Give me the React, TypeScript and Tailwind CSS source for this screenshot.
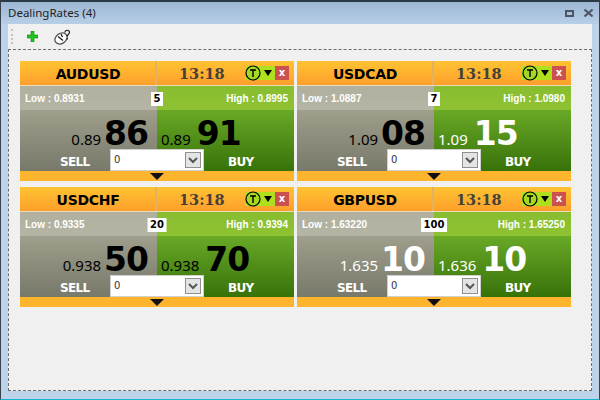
import React from "react";

type Rate = {
  pair: string; low: string; high: string; spread: string;
  sp: string; sb: string; bp: string; bb: string; white?: boolean; sellW?: boolean;
};

const rates: Rate[] = [
  { pair: "AUDUSD", low: "0.8931", high: "0.8995", spread: "5", sp: "0.89", sb: "86", bp: "0.89", bb: "91" },
  { pair: "USDCAD", low: "1.0887", high: "1.0980", spread: "7", sp: "1.09", sb: "08", bp: "1.09", bb: "15", white: true },
  { pair: "USDCHF", low: "0.9335", high: "0.9394", spread: "20", sp: "0.938", sb: "50", bp: "0.938", bb: "70" },
  { pair: "GBPUSD", low: "1.63220", high: "1.65250", spread: "100", sp: "1.635", sb: "10", bp: "1.636", bb: "10", white: true, sellW: true },
];

function Card({ r }: { r: Rate }) {
  const sellColor = r.sellW ? "text-white" : "text-black";
  const buyColor = r.white ? "text-white" : "text-black";
  return (
    <div className="relative w-[274px] h-[120px] flex flex-col">
      <div className="h-[25px] flex bg-gradient-to-b from-[#ffc332] to-[#fd9f2b] border-b border-[#e9dcb8]">
        <div className="w-[137px] flex items-center justify-center pt-[2px] pl-[1px] border-r-2 border-[#dfb264] text-[14px] tracking-[-0.3px] font-bold text-black font-['DejaVu_Sans',sans-serif]">
          {r.pair}
        </div>
        <div className="flex-1 flex items-center pl-[22px] text-[14.5px] font-bold text-[#44413a] font-['DejaVu_Serif',serif]">
          <span className="w-[66px] pt-[2px]">13:18</span>
          <span className="flex items-center h-[14px] w-[30px] bg-[#aee01e]">
            <svg width="16" height="16" viewBox="0 0 16 16" className="shrink-0">
              <circle cx="8" cy="8" r="7" fill="#a5d820" stroke="#000" strokeWidth="1.2" />
              <path d="M5 5h6M8 5v7" stroke="#000" strokeWidth="1.4" fill="none" />
            </svg>
            <svg width="8" height="6" viewBox="0 0 8 6" className="ml-[3px] shrink-0">
              <path d="M0 0h8L4 6z" fill="#000" />
            </svg>
          </span>
          <span className="w-[14px] h-[14px] bg-[#cb5050] text-white text-[10px] font-bold leading-[13px] text-center font-['DejaVu_Sans',sans-serif]">
            x
          </span>
        </div>
      </div>
      <div className="flex h-[24px] text-[10px] font-bold text-white font-['Liberation_Sans',sans-serif]">
        <div className="w-[137px] bg-gradient-to-b from-[#b1b09f] to-[#b5b5a5] flex items-center pl-[5px]">Low : {r.low}</div>
        <div className="w-[137px] bg-gradient-to-b from-[#88bd30] to-[#8fc232] flex items-center justify-end pr-[6px]">High : {r.high}</div>
      </div>
      <div className="flex h-[61px]">
        <div className="w-[137px] bg-gradient-to-b from-[#a09e8c] to-[#77796a] flex flex-col">
          <div className={`h-[39px] pt-[8px] flex items-baseline justify-end pr-[9px] ${sellColor}`}>
            <span className="text-[15px] mr-[3px] font-['Noto_Sans',sans-serif]">{r.sp}</span>
            <span className="text-[33px] leading-[31px] tracking-[-1px] font-bold font-['DejaVu_Sans',sans-serif]">{r.sb}</span>
          </div>
          <div className="flex-1 pl-[40px] text-[12px] tracking-[-0.7px] font-bold text-white font-['DejaVu_Sans',sans-serif] leading-[27px]">
            SELL
          </div>
        </div>
        <div className="w-[137px] bg-gradient-to-b from-[#69a926] to-[#377209] flex flex-col">
          <div className={`h-[39px] pt-[8px] flex items-baseline pl-[4px] ${buyColor}`}>
            <span className="text-[15px] mr-[6px] font-['Noto_Sans',sans-serif]">{r.bp}</span>
            <span className="text-[33px] leading-[31px] tracking-[-1px] font-bold font-['DejaVu_Sans',sans-serif]">{r.bb}</span>
          </div>
          <div className="flex-1 pl-[71px] text-[12px] tracking-[-0.7px] font-bold text-white font-['DejaVu_Sans',sans-serif] leading-[27px]">
            BUY
          </div>
        </div>
      </div>
      <div className="h-[10px] bg-[#feb52d] flex justify-center items-center">
        <svg width="14" height="7" viewBox="0 0 14 7"><path d="M0 0h14L7 7z" fill="#111" /></svg>
      </div>
      {/* spread badge */}
      <div className="absolute left-1/2 top-[31px] -translate-x-1/2 h-[14px] px-[2.5px] bg-white text-black text-[10px] leading-[14px] font-bold text-center font-['DejaVu_Sans',sans-serif]">
        {r.spread}
      </div>
      {/* amount select */}
      <div className="absolute left-[90px] top-[88px] w-[94px] h-[22px] bg-white border border-[#d0d0d0] flex items-center justify-between pl-[3px] pr-[2px]">
        <span className="text-[10px] text-[#333] font-['DejaVu_Sans',sans-serif] -mt-[2px]">0</span>
        <span className="w-[16px] h-[16px] bg-[#e4e4e4] border border-[#909090] flex items-center justify-center">
          <svg width="10" height="7" viewBox="0 0 10 7"><path d="M1 1l4 4 4-4" stroke="#555" strokeWidth="2" fill="none" /></svg>
        </span>
      </div>
    </div>
  );
}

export default function App() {
  return (
    <div className="w-[600px] h-[400px] flex flex-col bg-[#bcd3ea] border border-t-2 border-[#39434e] border-t-[#2c3a46] border-b-[#12b5cf] overflow-hidden font-['DejaVu_Sans',sans-serif]">
      <div className="h-[22px] shrink-0 bg-gradient-to-b from-[#9db6d3] to-[#b7cfe6] flex items-center justify-between pl-[7px] pr-[1px]">
        <span className="text-[11.5px] text-[#1e1e1e] font-['Noto_Sans',sans-serif]">DealingRates (4)</span>
        <span className="flex items-center gap-[10px] pr-[5px]">
          <span className="w-[9px] h-[7px] border-2 border-[#4e5566]" />
          <svg width="9" height="8" viewBox="0 0 9 8"><path d="M0.500 0.500l8 7M8.500 0.500l-8 7" stroke="#4e5566" strokeWidth="2" /></svg>
        </span>
      </div>
      <div className="flex-1 mx-[7px] mb-[8px] flex flex-col bg-[#f0f0f0]">
        <div className="h-[25px] shrink-0 flex items-center pl-[3px]">
          <span className="w-[3px] h-[15px] mr-[13px] border-l-2 border-dotted border-[#c4c4c4]" />
          <svg width="11" height="11" viewBox="0 0 11 11" className="mr-[16px]">
            <path d="M4 0h3v4h4v3H7v4H4V7H0V4h4z" fill="#1fc41f" stroke="#0b8a0b" strokeWidth="0.6" />
          </svg>
          <svg width="18" height="16" viewBox="0 0 18 16">
            <ellipse cx="7" cy="9.500" rx="6.500" ry="5" fill="#fff" stroke="#555" strokeWidth="1.300" transform="rotate(-35 7 9.500)" />
            <path d="M4 7.500l5 4" stroke="#222" strokeWidth="1.400" />
            <path d="M7 5l1.500 3" stroke="#222" strokeWidth="1.400" />
            <path d="M11 3.500c0-3 4.500-3 4.500 0 0 1.800-2.200 1.800-2.200 4M13.300 9v1.500" stroke="#222" strokeWidth="1.200" fill="none" />
          </svg>
        </div>
        <div className="flex-1 border border-dashed border-[#6e6e6e] pl-[11px] pt-[11px]">
          <div className="grid grid-cols-[274px_274px] gap-x-[3px] gap-y-[6px] justify-start">
            {rates.map((r) => <Card key={r.pair} r={r} />)}
          </div>
        </div>
      </div>
    </div>
  );
}
